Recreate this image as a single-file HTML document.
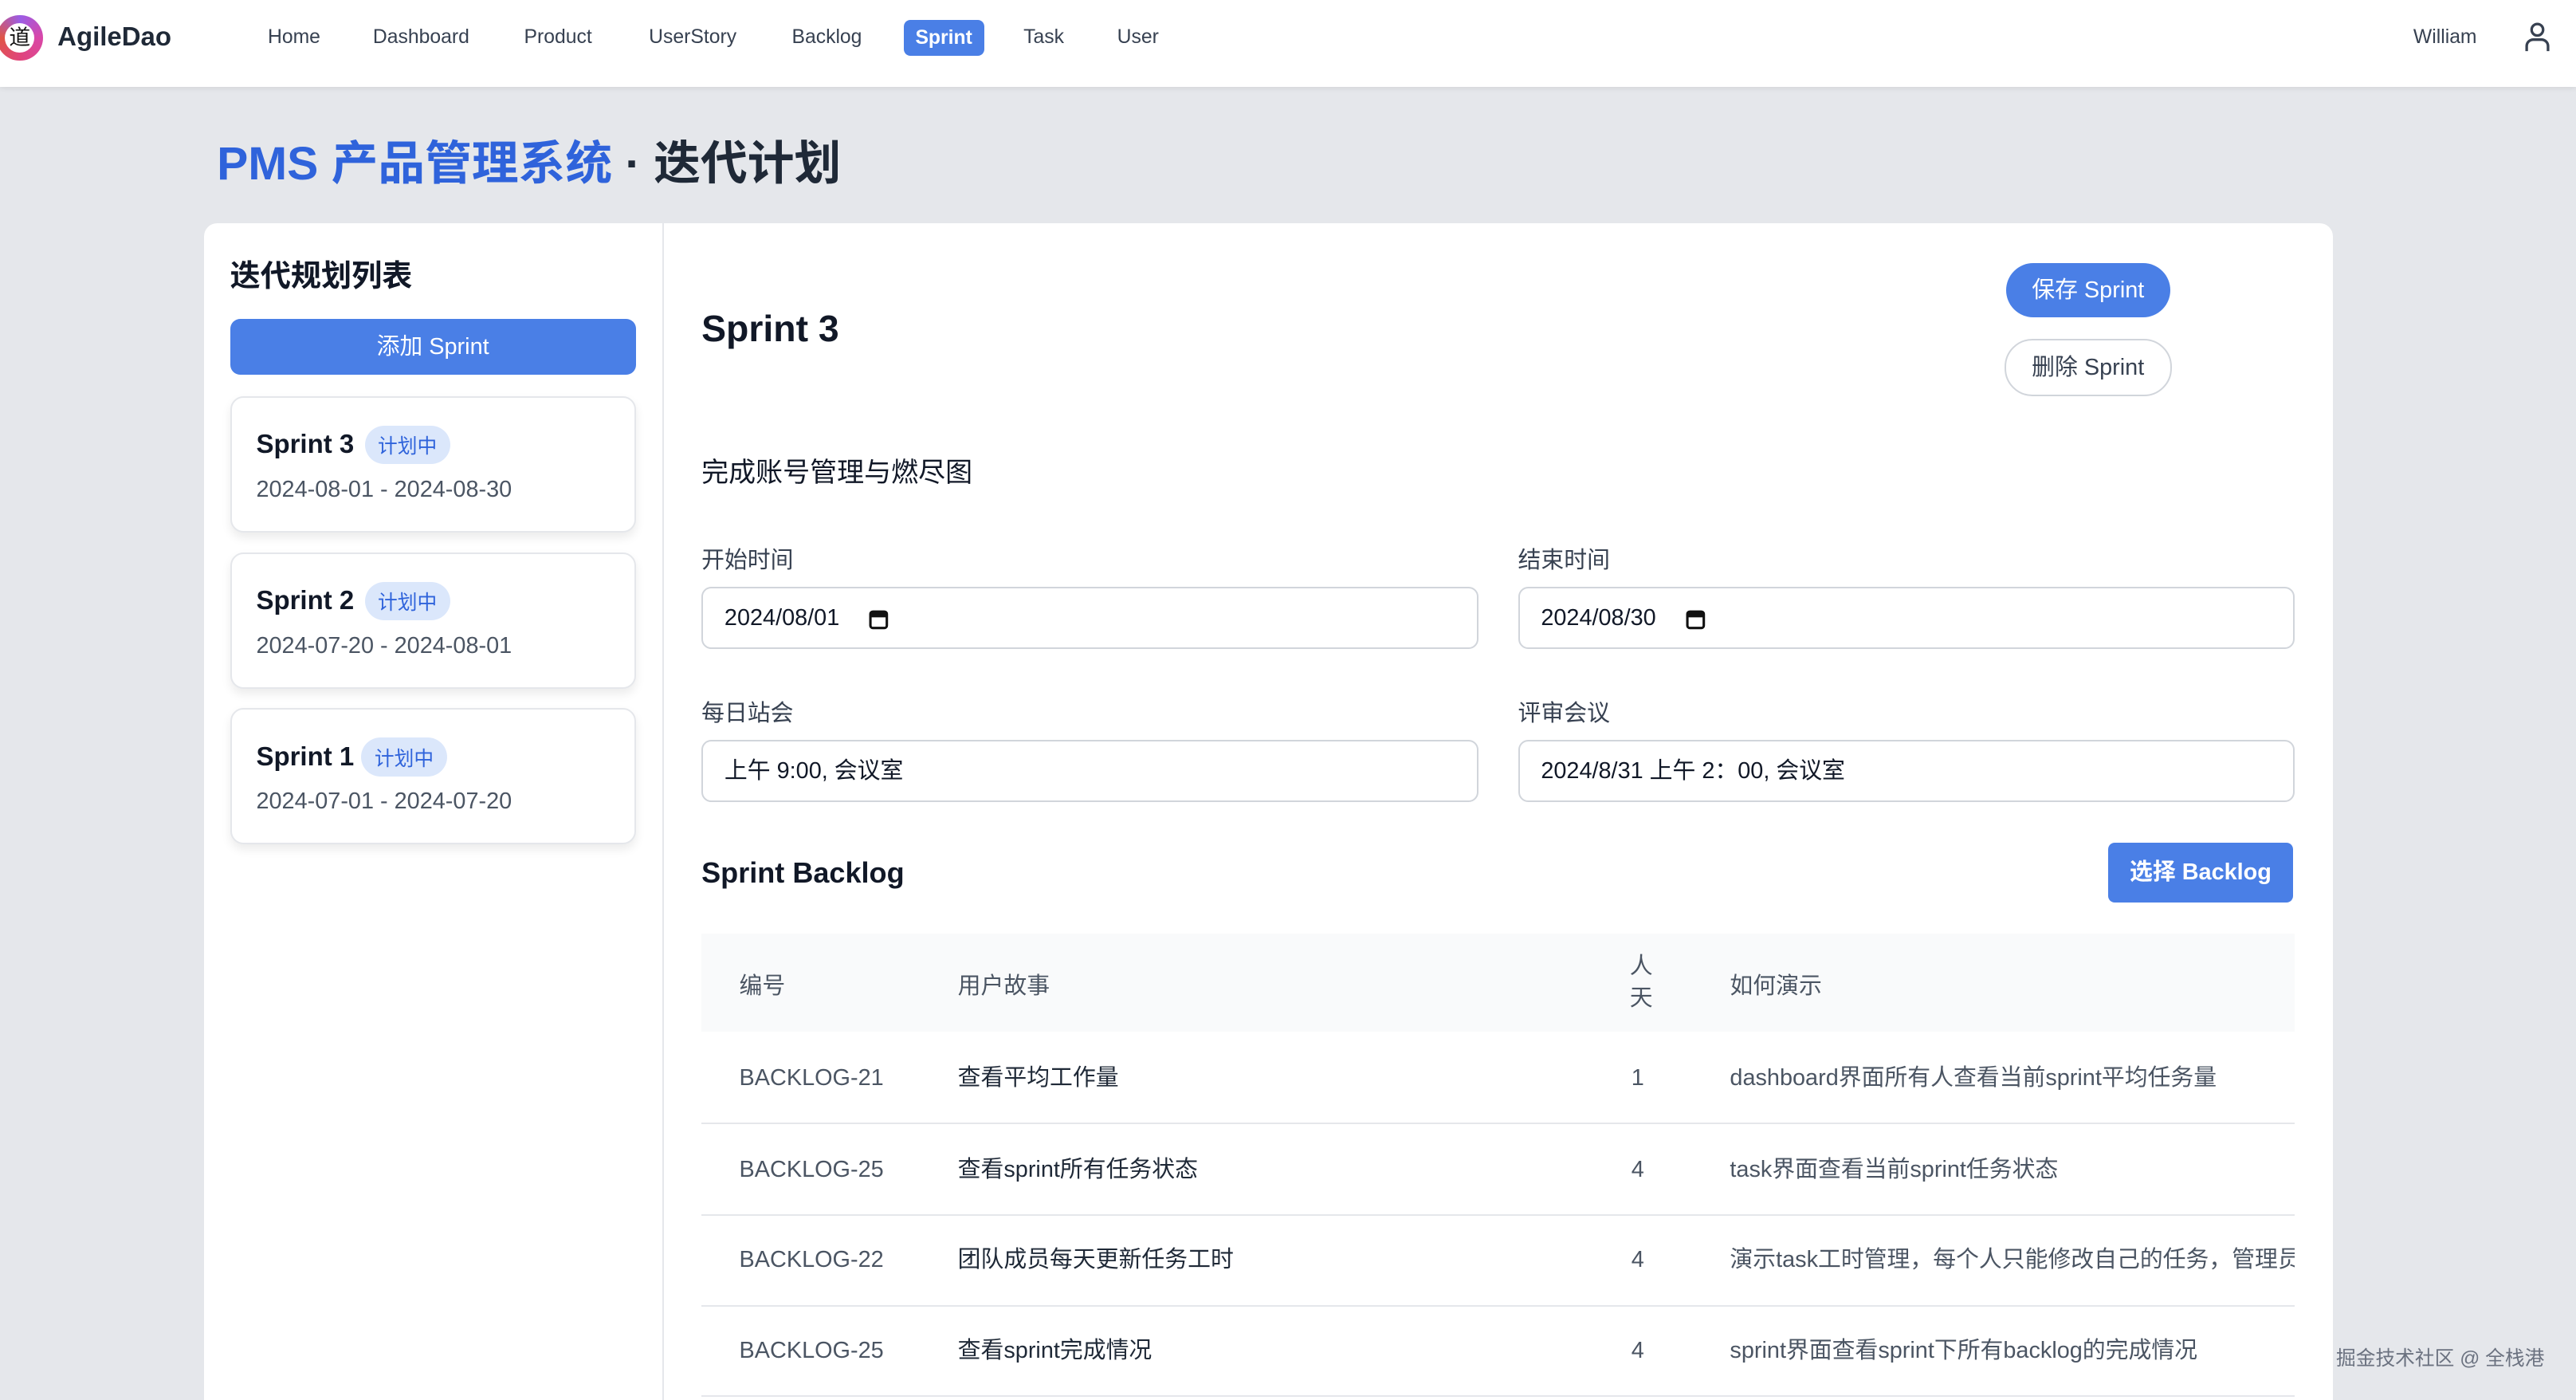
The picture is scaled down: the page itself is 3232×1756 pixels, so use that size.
<!DOCTYPE html>
<html><head><meta charset="utf-8"><style>
html{zoom:2.0612;overflow:hidden;height:852px}
body{margin:0;width:1568px;height:852px;overflow:hidden;background:#e5e7eb;font-family:"Liberation Sans","Noto Sans CJK SC",sans-serif;color:#1f2937;position:relative}
.a{position:absolute;white-space:nowrap}
.hdr{position:absolute;left:0;top:0;width:1568px;height:53px;background:#fff;box-shadow:0 1px 3px rgba(0,0,0,.08)}
.nav{font-size:12px;color:#374151;top:16px}
.card{position:absolute;left:124px;top:136px;width:1296px;height:716px;background:#fff;border-radius:8px 8px 0 0}
.sc{position:absolute;left:140px;width:245px;height:81px;border:1px solid #e5e7eb;border-radius:8px;box-shadow:0 3px 6px rgba(0,0,0,.08);background:#fff}
.sc .n{position:absolute;left:15px;top:19px;font-size:16px;font-weight:bold;color:#111827}
.sc .b{position:absolute;left:81px;top:17px;background:#dbe7fb;color:#2f63db;font-size:12px;padding:3px 8px;border-radius:12px}
.sc .d{position:absolute;left:15px;top:48px;font-size:14px;color:#4b5563}
.lab{font-size:14px;color:#374151}
.inp{position:absolute;height:38px;width:473px;border:1px solid #d1d5db;border-radius:6px;box-sizing:border-box;font-size:14px;color:#111827;padding:0 13px;line-height:36px}
.inp svg{vertical-align:middle;margin-left:18px}
.row{position:absolute;left:427px;width:970px;height:55px;border-bottom:1px solid #e5e7eb;font-size:14px;overflow:hidden}
.row span{position:absolute;top:20px;white-space:nowrap;line-height:16px}
</style></head><body>
<div class="hdr"></div>
<div class="a" style="left:-2px;top:9px;width:28px;height:28px;border-radius:50%;background:conic-gradient(#9b5de5,#d946a8,#e0457b,#e05545,#9b5de5)"></div>
<div class="a" style="left:3px;top:14px;width:18px;height:18px;border-radius:50%;background:#fff;font-size:13px;line-height:18px;text-align:center;color:#111">道</div>
<div class="a" style="left:35px;top:13px;font-size:16px;font-weight:bold;color:#1f2937">AgileDao</div>
<div class="a nav" style="left:163px">Home</div>
<div class="a nav" style="left:227px">Dashboard</div>
<div class="a nav" style="left:319px">Product</div>
<div class="a nav" style="left:395px">UserStory</div>
<div class="a nav" style="left:482px">Backlog</div>
<div class="a" style="left:550px;top:12px;width:49px;height:22px;background:#4a7fe6;border-radius:4px;color:#fff;font-size:12px;font-weight:bold;text-align:center;line-height:22px">Sprint</div>
<div class="a nav" style="left:623px">Task</div>
<div class="a nav" style="left:680px">User</div>
<div class="a nav" style="left:1469px">William</div>
<svg class="a" style="left:1536px;top:13px" width="17" height="19" viewBox="0 0 17 19" fill="none" stroke="#374151" stroke-width="1.6"><circle cx="8.5" cy="5" r="3.5"/><path d="M2 18v-3a4 4 0 0 1 4-4h5a4 4 0 0 1 4 4v3"/></svg>
<div class="a" style="left:132px;top:76px;font-size:28.5px;font-weight:bold"><span style="color:#2f63db">PMS 产品管理系统</span><span style="color:#1f2937"> · 迭代计划</span></div>
<div class="card"></div>
<div class="a" style="left:403px;top:136px;width:1px;height:716px;background:#e5e7eb"></div>
<div class="a" style="left:140px;top:153px;font-size:18.5px;font-weight:bold;color:#111827">迭代规划列表</div>
<div class="a" style="left:140px;top:194px;width:247px;height:34px;background:#4a7fe6;border-radius:6px;color:#fff;font-size:14px;text-align:center;line-height:34px">添加 Sprint</div>
<div class="sc" style="top:241px"><span class="n">Sprint 3</span><span class="b">计划中</span><span class="d">2024-08-01 - 2024-08-30</span></div>
<div class="sc" style="top:336px"><span class="n">Sprint 2</span><span class="b">计划中</span><span class="d">2024-07-20 - 2024-08-01</span></div>
<div class="sc" style="top:431px"><span class="n">Sprint 1</span><span class="b" style="left:79px">计划中</span><span class="d">2024-07-01 - 2024-07-20</span></div>
<div class="a" style="left:427px;top:187px;font-size:22.5px;font-weight:bold;color:#111827">Sprint 3</div>
<div class="a" style="left:1221px;top:160px;width:100px;height:33px;background:#4a7fe6;border-radius:17px;color:#fff;font-size:14px;text-align:center;line-height:33px">保存 Sprint</div>
<div class="a" style="left:1220px;top:206px;width:100px;height:33px;border:1px solid #d1d5db;border-radius:17px;color:#374151;font-size:14px;text-align:center;line-height:33px">删除 Sprint</div>
<div class="a" style="left:427px;top:274px;font-size:16.5px;color:#111827">完成账号管理与燃尽图</div>
<div class="a lab" style="left:427px;top:330px">开始时间</div>
<div class="a lab" style="left:924px;top:330px">结束时间</div>
<div class="inp" style="left:427px;top:357px">2024/08/01<svg width="12" height="13" viewBox="0 0 12 13"><rect x="1" y="2" width="10" height="10" rx="1.5" fill="none" stroke="#111" stroke-width="1.5"/><rect x="1" y="2" width="10" height="3.5" fill="#111"/></svg></div>
<div class="inp" style="left:924px;top:357px">2024/08/30<svg width="12" height="13" viewBox="0 0 12 13"><rect x="1" y="2" width="10" height="10" rx="1.5" fill="none" stroke="#111" stroke-width="1.5"/><rect x="1" y="2" width="10" height="3.5" fill="#111"/></svg></div>
<div class="a lab" style="left:427px;top:423px">每日站会</div>
<div class="a lab" style="left:924px;top:423px">评审会议</div>
<div class="inp" style="left:427px;top:450px">上午 9:00, 会议室</div>
<div class="inp" style="left:924px;top:450px">2024/8/31 上午 2：00, 会议室</div>
<div class="a" style="left:427px;top:521px;font-size:17.5px;font-weight:bold;color:#111827">Sprint Backlog</div>
<div class="a" style="left:1283px;top:513px;width:113px;height:36px;background:#4a7fe6;border-radius:4px;color:#fff;font-size:14px;font-weight:bold;text-align:center;line-height:36px">选择 Backlog</div>
<div class="a" style="left:427px;top:568px;width:970px;height:60px;background:#f9fafb;font-size:14px;color:#4b5563">
<span class="a" style="left:23px;top:21px">编号</span><span class="a" style="left:156px;top:21px">用户故事</span><span class="a" style="left:565px;top:11px;line-height:19px;white-space:normal;width:14px">人天</span><span class="a" style="left:626px;top:21px">如何演示</span></div>
<div class="row" style="top:628px"><span style="left:23px;color:#4b5563">BACKLOG-21</span><span style="left:156px">查看平均工作量</span><span style="left:566px;color:#4b5563">1</span><span style="left:626px;color:#4b5563">dashboard界面所有人查看当前sprint平均任务量</span></div>
<div class="row" style="top:684px"><span style="left:23px;color:#4b5563">BACKLOG-25</span><span style="left:156px">查看sprint所有任务状态</span><span style="left:566px;color:#4b5563">4</span><span style="left:626px;color:#4b5563">task界面查看当前sprint任务状态</span></div>
<div class="row" style="top:739px"><span style="left:23px;color:#4b5563">BACKLOG-22</span><span style="left:156px">团队成员每天更新任务工时</span><span style="left:566px;color:#4b5563">4</span><span style="left:626px;color:#4b5563">演示task工时管理，每个人只能修改自己的任务，管理员可</span></div>
<div class="row" style="top:794px"><span style="left:23px;color:#4b5563">BACKLOG-25</span><span style="left:156px">查看sprint完成情况</span><span style="left:566px;color:#4b5563">4</span><span style="left:626px;color:#4b5563">sprint界面查看sprint下所有backlog的完成情况</span></div>
<div class="a" style="left:1422px;top:817px;font-size:12px;color:#6b7280">掘金技术社区 @ 全栈港</div>
</body></html>
